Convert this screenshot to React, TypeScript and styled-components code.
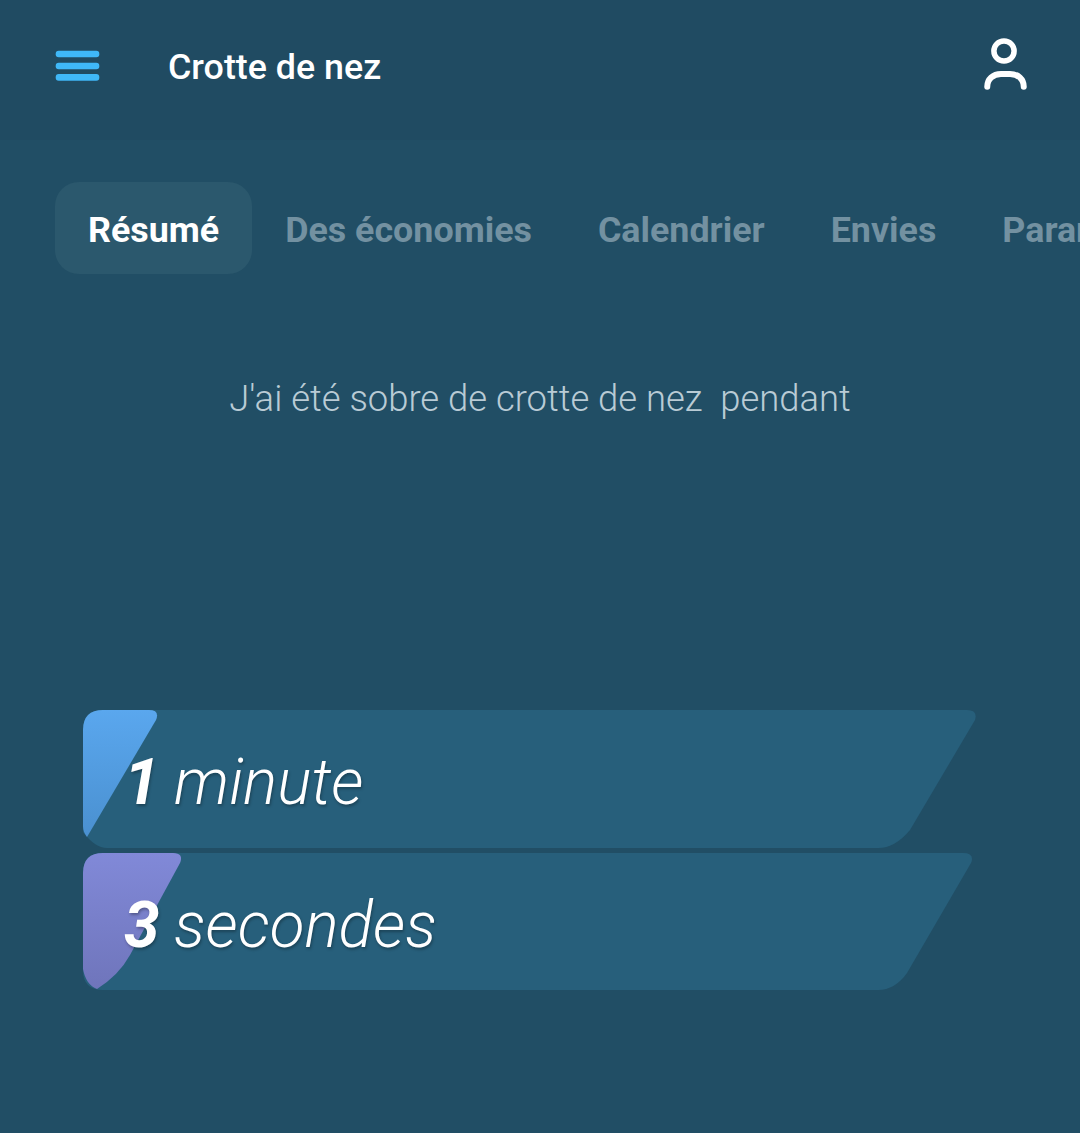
import styled, { createGlobalStyle } from 'styled-components'

const GlobalStyle = createGlobalStyle`
  html, body {
    margin: 0;
    padding: 0;
    background: #214e65;
  }

  body {
    font-family: Roboto, "Liberation Sans", sans-serif;
  }
`

const TABS = ['Résumé', 'Des économies', 'Calendrier', 'Envies', 'Paramètres']

const BARS = [
  {
    value: '1',
    unit: 'minute',
    height: 138,
    shape: 'M20 0H884Q895 0 892 10L827 120Q812 138 795 138H24Q12 138 0 122V20Q0 0 20 0Z',
    accent: 'M20 0H66Q77 0 73 10L4 127Q0 122 0 116V20Q0 0 20 0Z',
    from: '#5aa7ee',
    to: '#4a90d0',
  },
  {
    value: '3',
    unit: 'secondes',
    height: 137,
    shape: 'M20 0H880Q892 0 888 10L824 120Q812 137 795 137H20Q0 137 0 117V20Q0 0 20 0Z',
    accent: 'M20 0H90Q101 0 97 10L47 102Q36 122 14 136Q3 132 0 116V20Q0 0 20 0Z',
    from: '#8189d8',
    to: '#6f75bb',
  },
]

const Page = styled.div`
  height: 1133px;
  overflow: hidden;
  background: #214e65;
`

const Header = styled.header`
  height: 140px;
  box-sizing: border-box;
  padding: 0 52px 8px 55px;
  display: flex;
  align-items: center;
  background: #204b62;
`

const MenuIcon = styled.svg`
  width: 46px;
  height: 32px;
  flex: none;
`

const Title = styled.h1`
  margin: 0 0 0 67px;
  padding-top: 2px;
  flex: 1;
  font-size: 35.8px;
  font-weight: 500;
  color: #fff;
`

const UserIcon = styled.svg`
  width: 46px;
  height: 56px;
  flex: none;
`

const Tabs = styled.nav`
  margin: 42px 0 0 55px;
  display: flex;
  overflow: hidden;
`

const Tab = styled.div<{ $active?: boolean }>`
  flex: none;
  height: 92px;
  box-sizing: border-box;
  padding: 4px 33px 0;
  display: flex;
  align-items: center;
  border-radius: 24px;
  font-size: 35.85px;
  font-weight: 700;
  color: ${(p) => (p.$active ? '#fff' : '#7391a1')};
  background: ${(p) => (p.$active ? '#2b586d' : 'transparent')};
`

const Sentence = styled.p`
  margin: 104px 0 0;
  font-size: 36.4px;
  line-height: 42px;
  font-weight: 300;
  text-align: center;
  white-space: pre;
  color: #b9cbd5;
`

const Bars = styled.section`
  margin: 290px 0 0 83px;
  display: flex;
  flex-direction: column;
  gap: 5px;
`

const Bar = styled.div<{ $height: number }>`
  position: relative;
  width: 893px;
  height: ${(p) => p.$height}px;
  display: flex;
  align-items: center;
`

const BarShape = styled.svg`
  position: absolute;
  inset: 0;
  width: 100%;
  height: 100%;
`

const BarText = styled.div`
  position: relative;
  padding: 7px 0 0 41px;
  font-size: 64px;
  font-style: italic;
  font-weight: 300;
  color: #fff;
  text-shadow: 1px 2px 3px rgba(0, 0, 0, 0.3);
  white-space: pre;
`

const BarValue = styled.b`
  margin-right: -1px;
  font-weight: 700;
`

const App = () => {
  return (
    <Page>
      <GlobalStyle />
      <Header>
        <MenuIcon viewBox='0 0 46 32'>
          <g fill='#3fb8f8'>
            <rect x='0.7' y='0.7' width='43.6' height='6.6' rx='3' />
            <rect x='0.7' y='12.7' width='43.6' height='6.6' rx='3' />
            <rect x='0.7' y='24' width='43.6' height='6.8' rx='3' />
          </g>
        </MenuIcon>
        <Title>Crotte de nez</Title>
        <UserIcon viewBox='0 0 46 56' fill='none' stroke='#fff' strokeLinecap='round'>
          <circle cx='22' cy='13' r='10.1' strokeWidth='5.5' />
          <path d='M5.25 48.7C5.25 41 11 36 19 36H28C36 36 41.75 41 41.75 48.7' strokeWidth='6' />
        </UserIcon>
      </Header>
      <Tabs>
        {TABS.map((tab, index) => (
          <Tab key={tab} $active={index === 0}>
            {tab}
          </Tab>
        ))}
      </Tabs>
      <Sentence>J'ai été sobre de crotte de nez  pendant</Sentence>
      <Bars>
        {BARS.map((bar) => (
          <Bar key={bar.unit} $height={bar.height}>
            <BarShape viewBox={`0 0 893 ${bar.height}`}>
              <defs>
                <linearGradient id={`accent-${bar.value}`} x1='0' y1='0' x2='0' y2='1'>
                  <stop offset='0' stopColor={bar.from} />
                  <stop offset='1' stopColor={bar.to} />
                </linearGradient>
              </defs>
              <path d={bar.shape} fill='#275f7b' />
              <path d={bar.accent} fill={`url(#accent-${bar.value})`} />
            </BarShape>
            <BarText>
              <BarValue>{bar.value}</BarValue> {bar.unit}
            </BarText>
          </Bar>
        ))}
      </Bars>
    </Page>
  )
}

export default App
